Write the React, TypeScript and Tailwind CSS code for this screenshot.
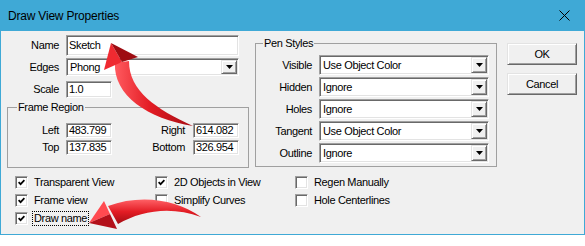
import React from "react";

const sunken =
  "border border-t-[#a0a0a0] border-l-[#a0a0a0] border-b-white border-r-white bg-white shadow-[inset_1px_1px_0_#696969,inset_-1px_-1px_0_#e3e3e3]";
const raised =
  "border border-t-[#e3e3e3] border-l-[#e3e3e3] border-r-[#696969] border-b-[#696969] bg-[#f0f0f0] shadow-[inset_1px_1px_0_#ffffff,inset_-1px_-1px_0_#a0a0a0]";

const penStyles = [
  { label: "Visible", value: "Use Object Color" },
  { label: "Hidden", value: "Ignore" },
  { label: "Holes", value: "Ignore" },
  { label: "Tangent", value: "Use Object Color" },
  { label: "Outline", value: "Ignore" },
];

function TextBox({ value, className }: { value: string; className: string }) {
  return (
    <div className={`${sunken} ${className} flex items-center pl-[2px]`}>
      {value}
    </div>
  );
}

function Combo({ value, className }: { value: string; className: string }) {
  return (
    <div className={`${sunken} ${className} flex items-center justify-between pl-[3px] pr-[1px]`}>
      <span>{value}</span>
      <span className={`${raised} flex h-[calc(100%-2px)] w-[16px] items-center justify-center`}>
        <svg width="7" height="4" viewBox="0 0 7 4">
          <path d="M0 0h7L3.5 4z" fill="#000" />
        </svg>
      </span>
    </div>
  );
}

function CheckBox({
  label,
  checked,
  focus,
}: {
  label: string;
  checked?: boolean;
  focus?: boolean;
}) {
  return (
    <div className="flex h-[18px] items-center gap-[6px]">
      <span className={`${sunken} flex h-[13px] w-[13px] items-center justify-center`}>
        {checked && (
          <svg width="7" height="7" viewBox="0 0 7 7">
            <polyline points="0.6,3.2 2.6,5.2 6.4,1.2" fill="none" stroke="#000" strokeWidth="1.7" />
          </svg>
        )}
      </span>
      {focus ? (
        <span className="-ml-[2px] border border-dotted border-black px-[1px] leading-[13px]">
          {label}
        </span>
      ) : (
        <span>{label}</span>
      )}
    </div>
  );
}

function Arrows() {
  return (
    <svg
      className="pointer-events-none absolute left-0 top-0"
      width="585"
      height="246"
      viewBox="0 0 585 246"
    >
      <defs>
        <linearGradient id="shaftA" x1="0" y1="0" x2="1" y2="0">
          <stop offset="0%" stopColor="#ff5a5f" />
          <stop offset="45%" stopColor="#e31c24" />
          <stop offset="100%" stopColor="#a50d14" />
        </linearGradient>
        <linearGradient id="shaftB" x1="0" y1="0" x2="0" y2="1">
          <stop offset="0%" stopColor="#ff6166" />
          <stop offset="50%" stopColor="#e31c24" />
          <stop offset="100%" stopColor="#a50d14" />
        </linearGradient>
      </defs>
      {/* arrow to Name */}
      <path
        d="M115 63 C113 95 148 119 193 126 C156 109 129 91 129 61 Z"
        fill="url(#shaftA)"
      />
      <polygon points="111,43 104,70 122,62" fill="#ef2a31" />
      <polygon points="111,43 122,62 138,57" fill="#9e0c12" />
      {/* arrow to Draw name */}
      <path
        d="M108 206 C140 194 176 199 201 217 C172 206 142 210 118 224 Z"
        fill="url(#shaftB)"
      />
      <polygon points="89,223 104,201 110,214" fill="#ff4a50" />
      <polygon points="89,223 110,214 117,229" fill="#b3101a" />
    </svg>
  );
}

export default function App() {
  return (
    <div className="relative h-[246px] w-[585px] bg-white font-['Liberation_Sans',Arial,sans-serif] text-[11px] tracking-[-0.35px] text-black">
      <div className="flex h-[235px] flex-col border-x border-b border-[#3fa9d6] bg-[#f0f0f0]">
        {/* title bar */}
        <div className="-mx-px flex h-[31px] items-center justify-between bg-[#3fa9d6] pl-[8px] pr-[15px]">
          <span className="text-[12px] tracking-[-0.2px]">Draw View Properties</span>
          <svg width="11" height="11" viewBox="0 0 11 11">
            <path d="M0.5 0.5l10 10M10.5 0.5l-10 10" stroke="#000" strokeWidth="1" />
          </svg>
        </div>

        <div className="flex flex-col pl-[4px]">
          <div className="flex items-start">
            {/* left column */}
            <div className="flex w-[245px] flex-col pt-[4px]">
              <div className="flex h-[21px] items-center gap-[7px]">
                <span className="w-[54px] text-right">Name</span>
                <TextBox value="Sketch" className="h-[21px] w-[173px]" />
              </div>
              <div className="mt-[2px] flex h-[18px] items-center gap-[7px]">
                <span className="w-[54px] text-right">Edges</span>
                <Combo value="Phong" className="h-[18px] w-[173px]" />
              </div>
              <div className="mt-[5px] flex h-[17px] items-center gap-[7px]">
                <span className="w-[54px] text-right">Scale</span>
                <TextBox value="1.0" className="h-[17px] w-[46px]" />
              </div>
              <fieldset className="ml-[2px] mt-[3px] w-[242px] border border-[#a0a0a0] pb-[12px]">
                <legend className="ml-[9px] px-[1px] leading-[13px]">Frame Region</legend>
                <div className="mt-[9px] flex h-[15px] items-center">
                  <span className="w-[51px] text-right">Left</span>
                  <TextBox value="483.799" className="ml-[7px] h-[15px] w-[46px]" />
                  <span className="w-[73px] text-right">Right</span>
                  <TextBox value="614.082" className="ml-[8px] h-[15px] w-[46px]" />
                </div>
                <div className="mt-[2px] flex h-[15px] items-center">
                  <span className="w-[51px] text-right">Top</span>
                  <TextBox value="137.835" className="ml-[7px] h-[15px] w-[46px]" />
                  <span className="w-[73px] text-right">Bottom</span>
                  <TextBox value="326.954" className="ml-[8px] h-[15px] w-[46px]" />
                </div>
              </fieldset>
            </div>

            {/* pen styles */}
            <fieldset className="ml-[5px] mt-[6px] w-[242px] border border-[#a0a0a0] pb-[3px]">
              <legend className="ml-[7px] px-[1px] leading-[13px]">Pen Styles</legend>
              <div className="mt-[5px] flex flex-col gap-[2px]">
                {penStyles.map((p) => (
                  <div key={p.label} className="flex h-[20px] items-center gap-[7px]">
                    <span className="w-[56px] text-right">{p.label}</span>
                    <Combo value={p.value} className="h-[20px] w-[170px]" />
                  </div>
                ))}
              </div>
            </fieldset>

            {/* buttons */}
            <div className="ml-[10px] flex flex-col gap-[8px] pt-[12px]">
              <button className={`${raised} h-[22px] w-[70px]`}>OK</button>
              <button className={`${raised} h-[22px] w-[70px]`}>Cancel</button>
            </div>
          </div>

          {/* options */}
          <div className="mt-[5px] grid grid-cols-[140px_140px_140px] pl-[10px]">
            <CheckBox label="Transparent View" checked />
            <CheckBox label="2D Objects in View" checked />
            <CheckBox label="Regen Manually" />
            <CheckBox label="Frame view" checked />
            <CheckBox label="Simplify Curves" />
            <CheckBox label="Hole Centerlines" />
            <CheckBox label="Draw name" checked focus />
          </div>
        </div>
      </div>
      <Arrows />
    </div>
  );
}
